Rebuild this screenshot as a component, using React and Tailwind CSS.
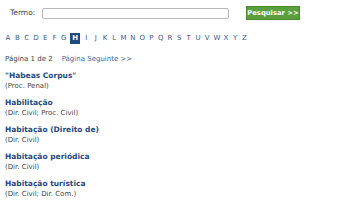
const letters = "ABCDEFGHIJKLMNOPQRSTUVWXYZ".split("");

const entries = [
    { title: "\"Habeas Corpus\"", sub: "(Proc. Penal)" },
    { title: "Habilitação", sub: "(Dir. Civil; Proc. Civil)" },
    { title: "Habitação (Direito de)", sub: "(Dir. Civil)" },
    { title: "Habitação periódica", sub: "(Dir. Civil)" },
    { title: "Habitação turística", sub: "(Dir. Civil; Dir. Com.)" },
];

const App = () => {
    return (
        <div className="w-[350px] h-[200px] bg-white overflow-hidden font-['DejaVu_Sans',sans-serif]">
            <div className="flex items-center h-[26px] pl-[10px]">
                <span className="text-[7.5px] text-[#444] w-[32px]">Termo:</span>
                <div className="w-[187px] h-[11px] border border-[#b8b8b8] rounded-[2px] bg-white" />
                <button className="ml-[17px] w-[54px] h-[14px] bg-[#5c9e3c] border border-[#4a8a2e] text-white text-[6.8px] font-bold leading-none whitespace-nowrap flex items-center justify-center">
                    Pesquisar &gt;&gt;
                </button>
            </div>

            <div className="flex items-center pl-[5px] h-[13px] mt-[6px] gap-[3.3px] text-[7px] text-[#3a5a8a]">
                {letters.map((l) =>
                    l === "H" ? (
                        <span key={l} className="w-[10px] h-[11px] bg-[#1d4b80] text-white font-bold flex items-center justify-center">
                            {l}
                        </span>
                    ) : (
                        <span key={l} className="w-[6px] text-center">{l}</span>
                    )
                )}
            </div>

            <div className="flex pl-[5px] mt-[11px] text-[7px] leading-none">
                <span className="text-[#444]">Página 1 de 2</span>
                <span className="ml-[9px] text-[#3a6aa0]">Página Seguinte &gt;&gt;</span>
            </div>

            <div className="pl-[5px] mt-[9px] flex flex-col gap-[9.6px]">
                {entries.map((e) => (
                    <div key={e.title} className="leading-none">
                        <div className="text-[7.5px] font-bold text-[#1f4a80]">{e.title}</div>
                        <div className="text-[7px] text-[#444] mt-[3px]">{e.sub}</div>
                    </div>
                ))}
            </div>
        </div>
    );
};

export default App;
